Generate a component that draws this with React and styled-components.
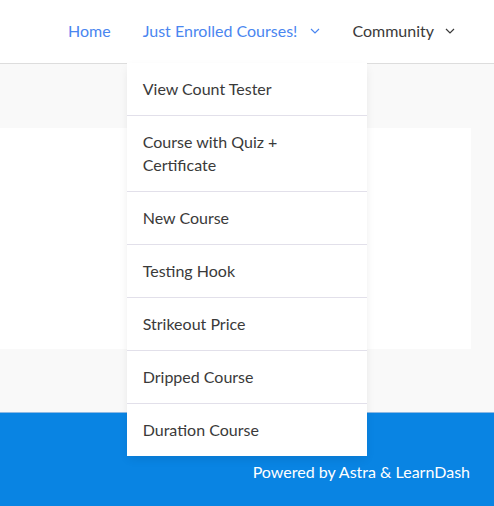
import React from "react"
import styled, { createGlobalStyle } from "styled-components"

const GlobalStyle = createGlobalStyle`
  html, body {
    margin: 0;
    padding: 0;
    background: #f9f9f9;
    font-family: Lato, "Open Sans", sans-serif;
    -webkit-font-smoothing: antialiased;
  }
  * { box-sizing: border-box; }
`;

const Page = styled.div`
  width: 494px;
  height: 506px;
  display: flex;
  flex-direction: column;
  overflow: hidden;
`;

const Header = styled.header`
  height: 64px;
  background: #fff;
  border-bottom: 1px solid #dddddd;
  display: flex;
  justify-content: flex-end;
  padding-right: 23px;
  position: relative;
  z-index: 2;
`;

const Menu = styled.ul`
  display: flex;
  margin: 0;
  padding: 0;
  list-style: none;
`;

const MenuItem = styled.li`
  position: relative;
  height: 63px;
  display: flex;
  align-items: center;
  padding: 0 16px 2px;
  font-size: 16px;
  color: ${p => (p.$active ? "#4a86f0" : "#3a3a3a")};
`;

const Chevron = styled.svg`
  margin-left: ${p => p.$gap}px;
  width: 10px;
  height: 6px;
`;

const Dropdown = styled.ul`
  position: absolute;
  top: 63px;
  left: 0;
  width: 240px;
  margin: 0;
  padding: 0;
  list-style: none;
  background: #fff;
  box-shadow: 0 4px 10px -2px rgba(0, 0, 0, 0.1);
`;

const DropItem = styled.li`
  padding: 14px 16px 15px;
  line-height: 23px;
  font-size: 16px;
  color: #3a3a3a;
  border-top: 1px solid #e2e0ea;
  &:first-child {
    border-top: none;
  }
`;

const Main = styled.main`
  flex: 1;
  background: #f9f9f9;
  padding: 64px 23px 63px 0;
`;

const Card = styled.div`
  height: 221px;
  background: #fff;
`;

const Footer = styled.footer`
  height: 94px;
  background: #0984e3;
  border-top: 1px solid #8db9e4;
  display: flex;
  justify-content: flex-end;
  padding: 47px 24px 0 0;
  color: #fff;
  font-size: 16px;
  line-height: 23px;
`;

const ChevronIcon = ({ color, gap }) => (
  <Chevron viewBox="0 0 10 6" $gap={gap}>
    <path d="M1 1l4 4 4-4" fill="none" stroke={color} strokeWidth="1.2" />
  </Chevron>
);

const courses = [
  "View Count Tester",
  "Course with Quiz + Certificate",
  "New Course",
  "Testing Hook",
  "Strikeout Price",
  "Dripped Course",
  "Duration Course",
];

const App = () => (
  <Page>
    <GlobalStyle />
    <Header>
      <Menu>
        <MenuItem $active>Home</MenuItem>
        <MenuItem $active>
          Just Enrolled Courses!
          <ChevronIcon color="#4a86f0" gap={13} />
          <Dropdown>
            {courses.map(c => (
              <DropItem key={c}>{c}</DropItem>
            ))}
          </Dropdown>
        </MenuItem>
        <MenuItem>
          Community
          <ChevronIcon color="#3a3a3a" gap={11} />
        </MenuItem>
      </Menu>
    </Header>
    <Main>
      <Card />
    </Main>
    <Footer>Powered by Astra &amp; LearnDash</Footer>
  </Page>
);

export default App
